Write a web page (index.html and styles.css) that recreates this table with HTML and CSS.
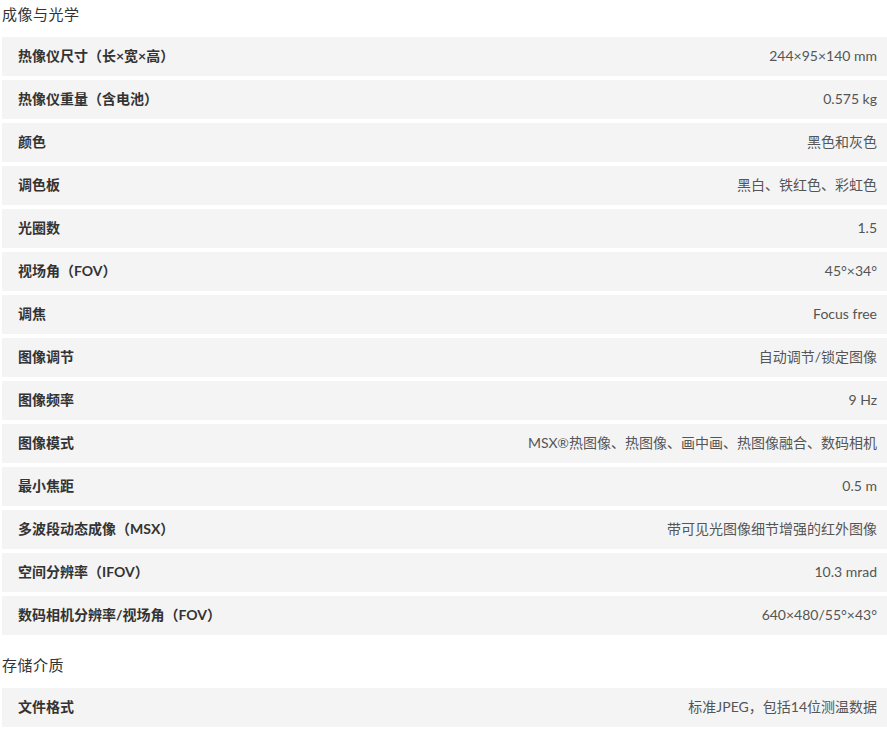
FILE: index.html
```html
<!DOCTYPE html>
<html lang="zh-CN">
<head>
    <meta charset="UTF-8">
    <meta name="viewport" content="width=device-width, initial-scale=1.0">
    <title>规格参数</title>
    <link rel="stylesheet" href="styles.css">
</head>
<body>

<div class="specs">
    <div class="spec-group">
        <div class="group-title">成像与光学</div>
        <div class="spec-row"><span class="spec-name">热像仪尺寸（长×宽×高）</span><span class="spec-value">244×95×140 mm</span></div>
        <div class="spec-row"><span class="spec-name">热像仪重量（含电池）</span><span class="spec-value">0.575 kg</span></div>
        <div class="spec-row"><span class="spec-name">颜色</span><span class="spec-value">黑色和灰色</span></div>
        <div class="spec-row"><span class="spec-name">调色板</span><span class="spec-value">黑白、铁红色、彩虹色</span></div>
        <div class="spec-row"><span class="spec-name">光圈数</span><span class="spec-value">1.5</span></div>
        <div class="spec-row"><span class="spec-name">视场角（FOV）</span><span class="spec-value">45°×34°</span></div>
        <div class="spec-row"><span class="spec-name">调焦</span><span class="spec-value">Focus free</span></div>
        <div class="spec-row"><span class="spec-name">图像调节</span><span class="spec-value">自动调节/锁定图像</span></div>
        <div class="spec-row"><span class="spec-name">图像频率</span><span class="spec-value">9 Hz</span></div>
        <div class="spec-row"><span class="spec-name">图像模式</span><span class="spec-value">MSX®热图像、热图像、画中画、热图像融合、数码相机</span></div>
        <div class="spec-row"><span class="spec-name">最小焦距</span><span class="spec-value">0.5 m</span></div>
        <div class="spec-row"><span class="spec-name">多波段动态成像（MSX）</span><span class="spec-value">带可见光图像细节增强的红外图像</span></div>
        <div class="spec-row"><span class="spec-name">空间分辨率（IFOV）</span><span class="spec-value">10.3 mrad</span></div>
        <div class="spec-row"><span class="spec-name">数码相机分辨率/视场角（FOV）</span><span class="spec-value">640×480/55°×43°</span></div>
    </div>

    <div class="spec-group">
        <div class="group-title">存储介质</div>
        <div class="spec-row"><span class="spec-name">文件格式</span><span class="spec-value">标准JPEG，包括14位测温数据</span></div>
    </div>
</div>

</body>
</html>
```

FILE: styles.css
```css
body {
    margin: 0;
    padding: 0;
    background: #fff;
    color: #333;
    font-family: Lato, "Noto Sans CJK SC", sans-serif;
}
.specs {
    padding-left: 2px;
}
.spec-group {
    margin-bottom: 16px;
}
.group-title {
    height: 27px;
    line-height: 27px;
    margin-bottom: 10px;
    font-family: "Noto Sans CJK SC", sans-serif;
    font-size: 15px;
    color: #333;
    letter-spacing: 0.5px;
}
.spec-row {
    display: flex;
    justify-content: space-between;
    align-items: center;
    box-sizing: border-box;
    height: 39px;
    margin-bottom: 4px;
    padding: 0 10px 3px 16px;
    background: #f4f4f4;
    font-size: 14px;
}
.spec-name {
    font-weight: bold;
    color: #333;
}
.spec-value {
    color: #555;
    text-align: right;
}
```
